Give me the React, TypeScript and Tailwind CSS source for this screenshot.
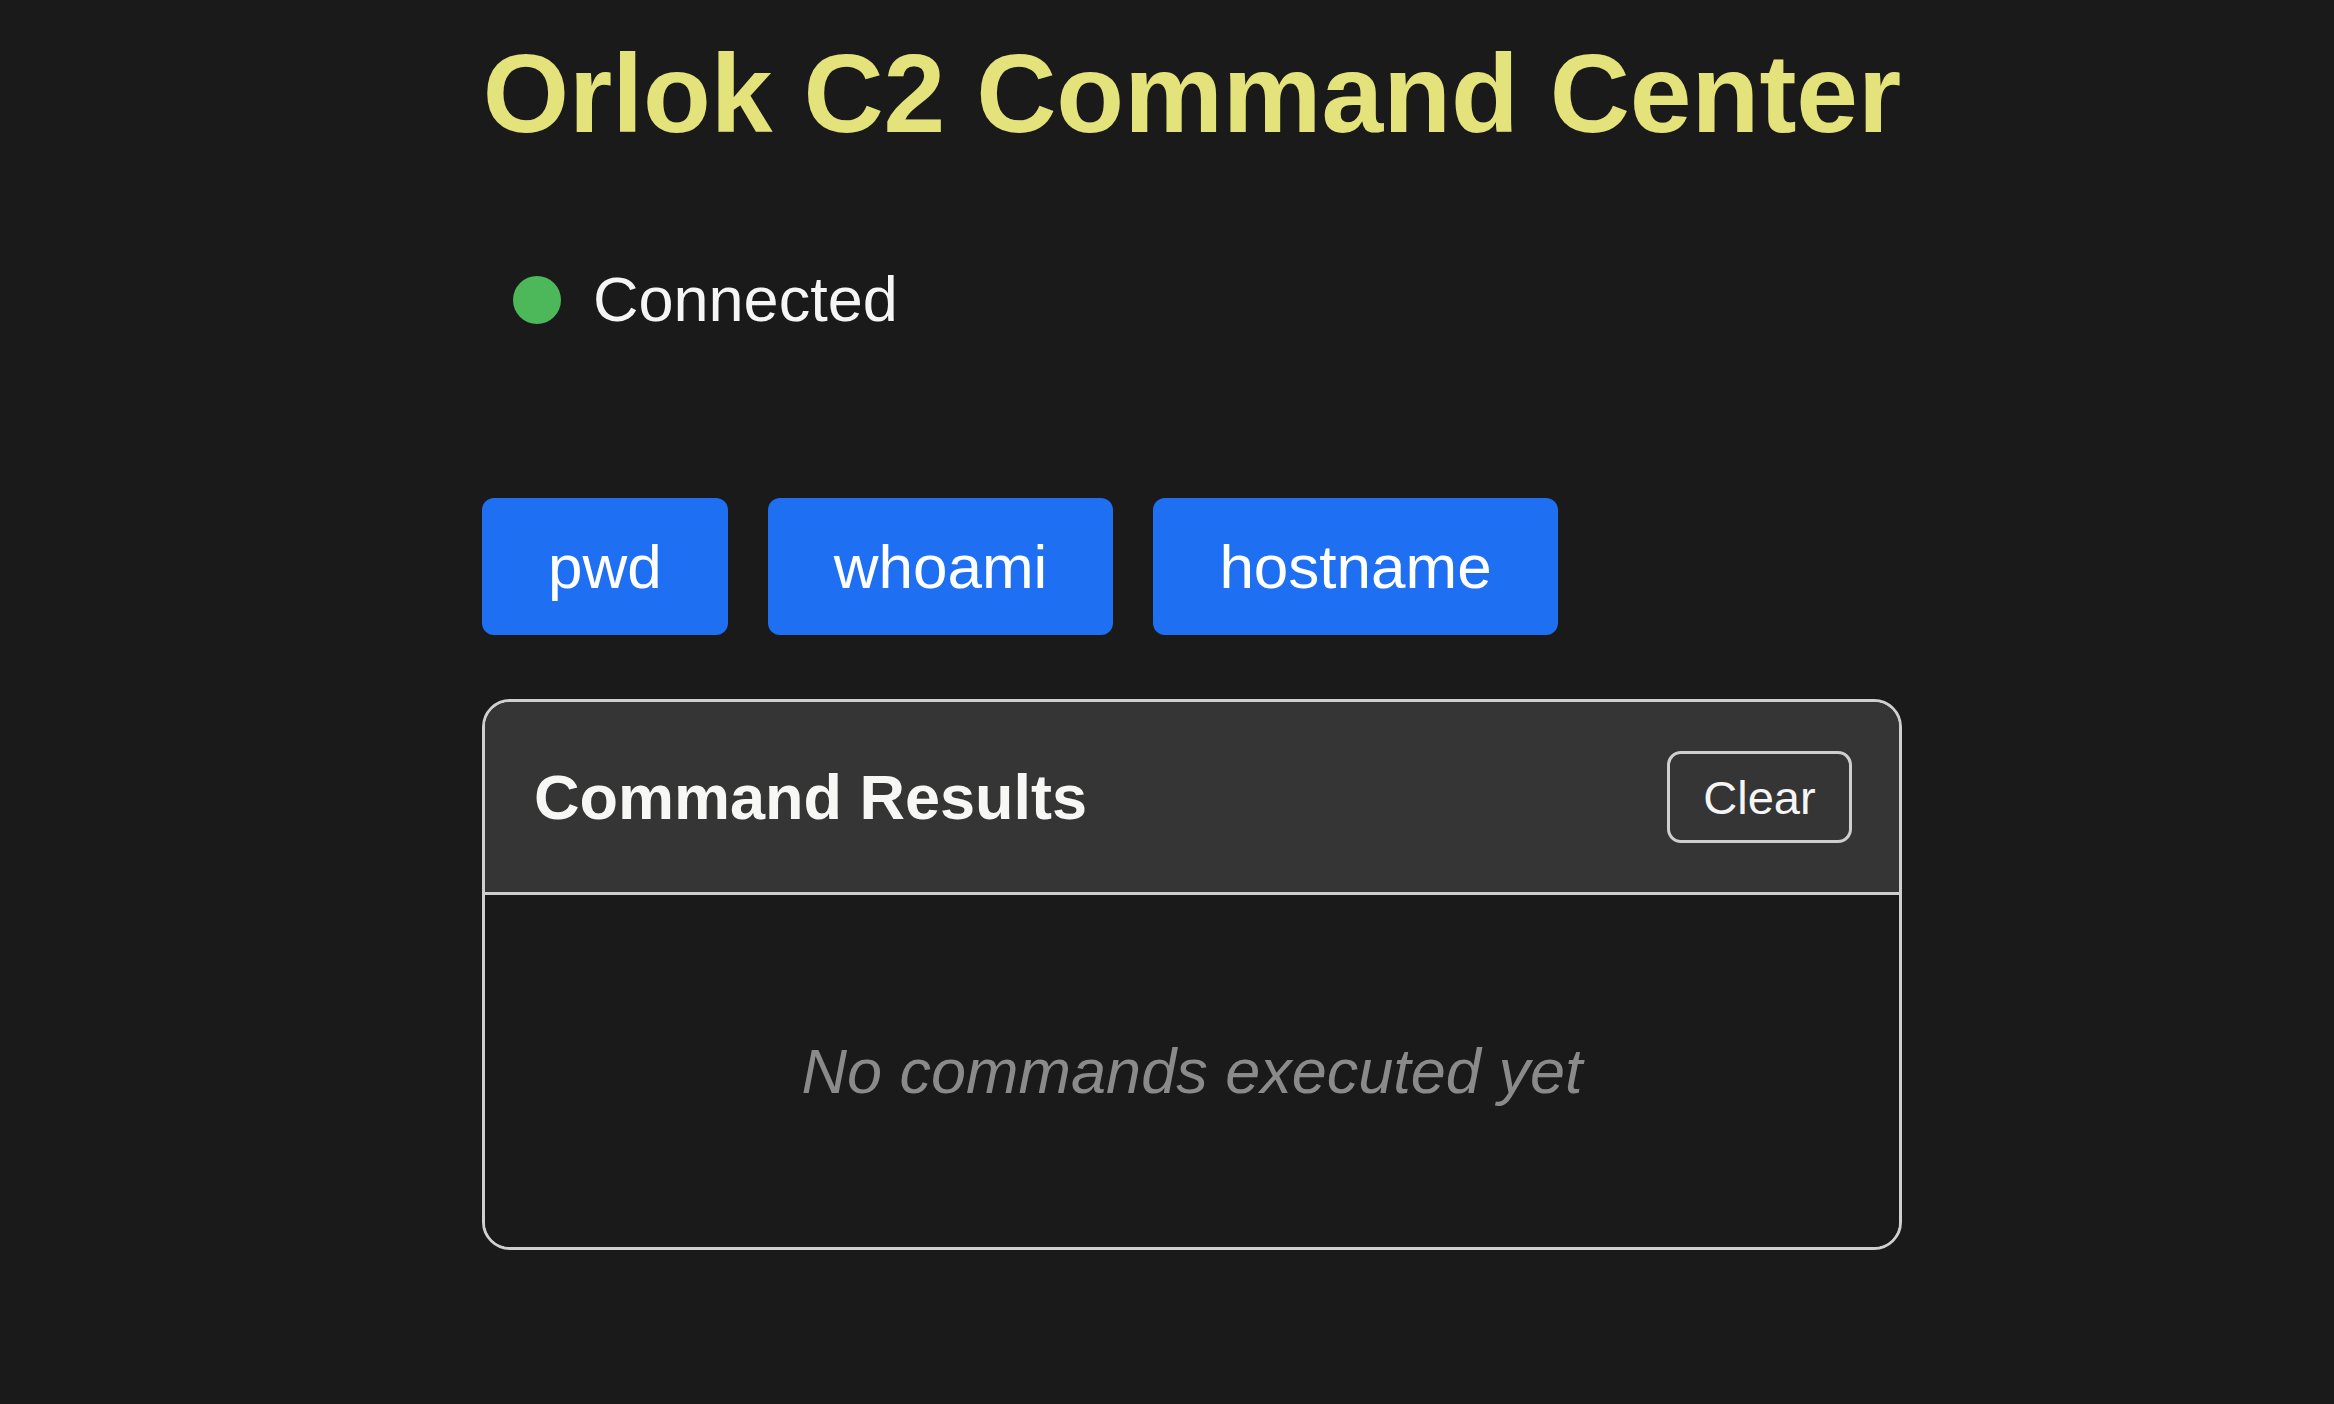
import React from "react";

export default function App() {
  const cmds = ["pwd", "whoami", "hostname"];
  return (
    <div className="min-h-screen w-full bg-[#1a1a1a] font-['Liberation_Sans',Arial,sans-serif]">
      <div className="ml-[482px] w-[1420px] pt-[39px]">
        <h1 className="text-center text-[111px] leading-none font-bold text-[#e4e37b] whitespace-nowrap">
          Orlok C2 Command Center
        </h1>
        <div className="mt-[118px] flex h-[63px] items-center gap-[32px] pl-[31px]">
          <span className="block h-[48px] w-[48px] rounded-full bg-[#4db85a]" />
          <span className="text-[63px] leading-none text-[#f5f5f5]">Connected</span>
        </div>
        <div className="mt-[167px] flex gap-[40px]">
          {cmds.map((c) => (
            <button
              key={c}
              className="flex h-[137px] items-center justify-center rounded-[12px] bg-[#1e6ff2] px-[66px] text-[62px] leading-none text-white"
            >
              {c}
            </button>
          ))}
        </div>
        <div className="mt-[64px] overflow-hidden rounded-[28px] border-[3px] border-[#cfcfcf]">
          <div className="flex h-[193px] items-center justify-between border-b-[3px] border-[#cfcfcf] bg-[#353535] pl-[49px] pr-[47px]">
            <span className="text-[63px] font-bold leading-none text-[#f7f7f5]">Command Results</span>
            <button className="flex h-[92px] w-[185px] items-center justify-center rounded-[14px] border-[3px] border-[#cfcfcf] text-[47px] leading-none text-[#f5f5f5]">
              Clear
            </button>
          </div>
          <div className="flex h-[352px] items-center justify-center bg-[#1a1a1a]">
            <span className="text-[63px] italic leading-none text-[#8a8a8a]">No commands executed yet</span>
          </div>
        </div>
      </div>
    </div>
  );
}
